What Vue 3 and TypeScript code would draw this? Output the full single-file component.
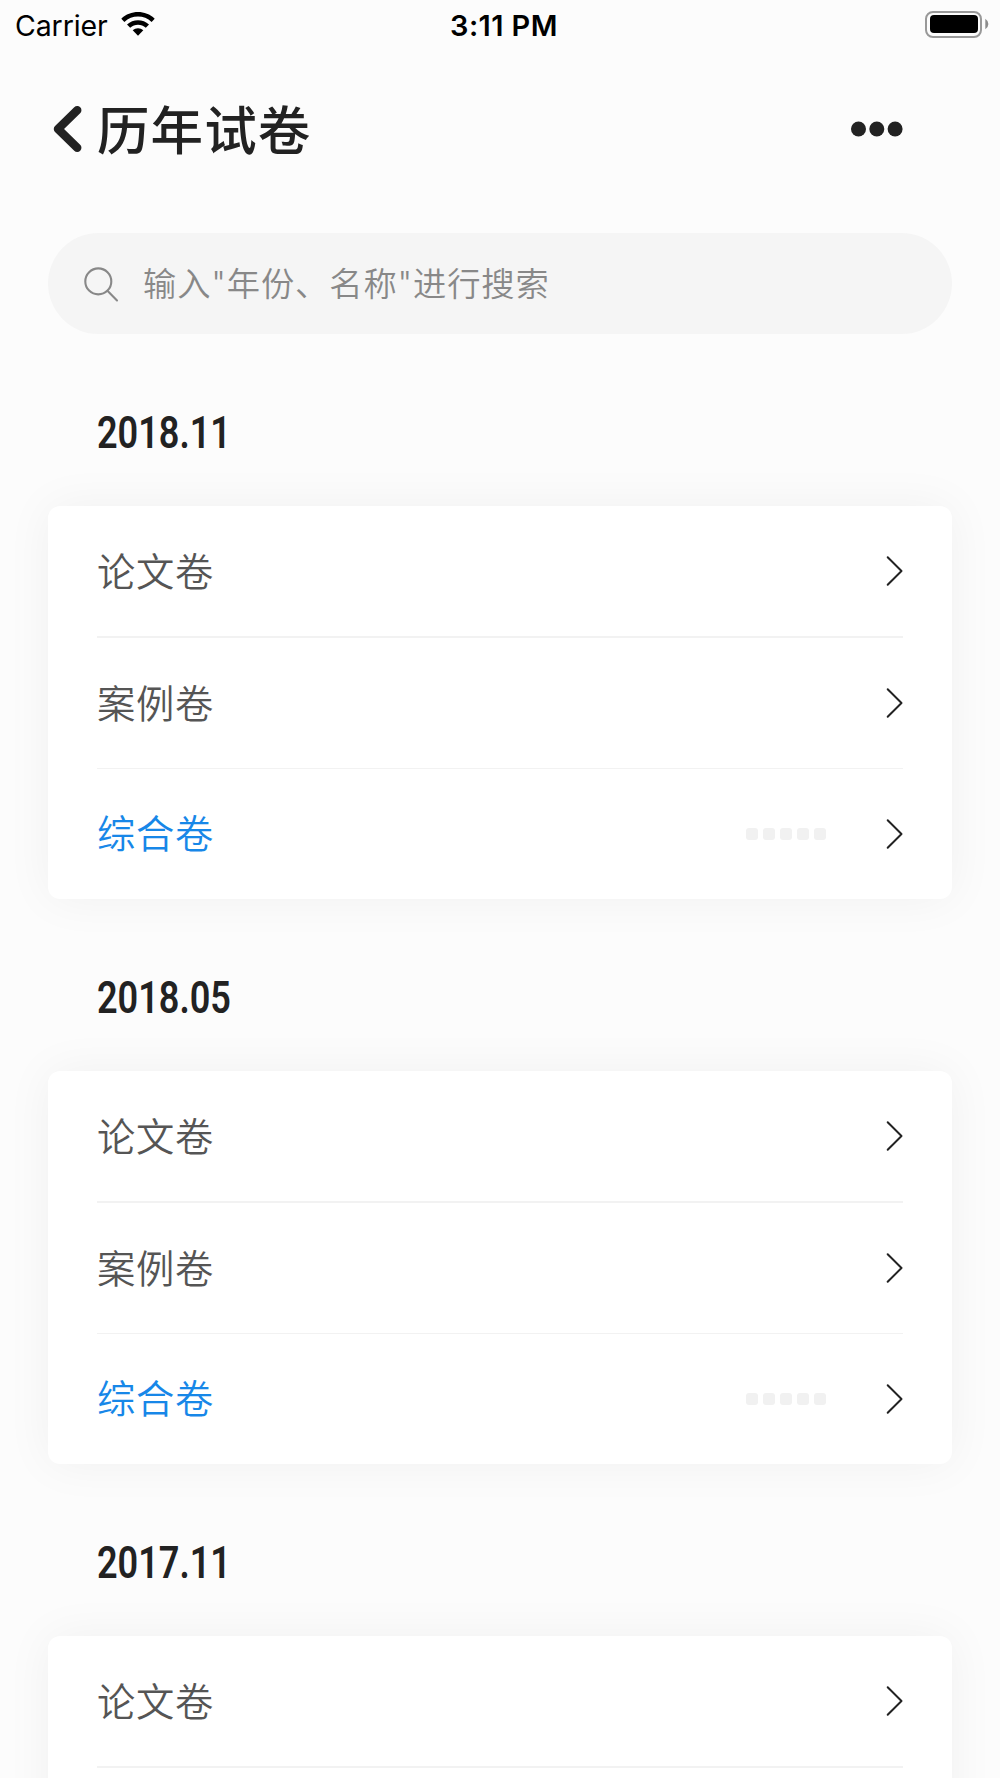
<script setup lang="ts">
interface Paper {
  name: string
  active?: boolean
}
interface Group {
  date: string
  papers: Paper[]
}

const papers: Paper[] = [
  { name: '论文卷' },
  { name: '案例卷' },
  { name: '综合卷', active: true },
]
const groups: Group[] = [
  { date: '2018.11', papers },
  { date: '2018.05', papers },
  { date: '2017.11', papers: papers.slice(0, 1) },
]
</script>

<template>
  <div class="screen">
    <div class="status">
      <div class="status-left">
        <span class="carrier">Carrier</span>
        <svg class="wifi" width="34" height="25" viewBox="0 0 34 25">
          <path d="M0.3 6.7 C9.5 -2.1 24.5 -2.1 33.7 6.7 L30.6 10 C23 2.8 11 2.8 3.4 10 Z" />
          <path d="M6 12.6 C12 6.7 22 6.7 28 12.6 L24.8 15.8 C20.5 11.7 13.5 11.7 9.2 15.8 Z" />
          <path d="M11.7 18.3 C14.7 15.5 19.3 15.5 22.3 18.3 L17 23.8 Z" />
        </svg>
      </div>
      <span class="time">3:11 PM</span>
      <div class="battery">
        <div class="battery-body"><div class="battery-fill"></div></div>
        <svg width="4" height="12" viewBox="0 0 4 12"><path d="M0.3 0.8 Q3.4 3 3.4 6 Q3.4 9 0.3 11.2 Z" fill="#8c8c8c" /></svg>
      </div>
    </div>

    <header class="header">
      <svg class="back" width="29" height="46" viewBox="0 0 29 46">
        <path d="M24.2 4.3 L5 23 L24.2 41.7" />
      </svg>
      <h1 class="title">历年试卷</h1>
      <svg class="more" width="52" height="16" viewBox="0 0 52 16">
        <circle cx="7.5" cy="8" r="7.5" />
        <circle cx="25.8" cy="8" r="7.5" />
        <circle cx="44.1" cy="8" r="7.5" />
      </svg>
    </header>

    <label class="search">
      <svg width="36" height="36" viewBox="0 0 36 36">
        <circle cx="14.3" cy="14.4" r="13" />
        <path d="M23.7 24 L33 33.4" />
      </svg>
      <input class="search-input" type="text" placeholder="输入&quot;年份、名称&quot;进行搜索" />
    </label>

    <section v-for="group in groups" :key="group.date" class="group">
      <h2 class="date"><span>{{ group.date }}</span></h2>
      <ul class="card">
        <li v-for="paper in group.papers" :key="paper.name" class="row">
          <span class="name" :class="{ active: paper.active }">{{ paper.name }}</span>
          <div v-if="paper.active" class="score">
            <i v-for="n in 5" :key="n"></i>
          </div>
          <svg class="arrow" width="18" height="32" viewBox="0 0 18 32">
            <path d="M2.7 2.3 L16.5 16 L2.7 29.7" />
          </svg>
        </li>
      </ul>
    </section>
  </div>
</template>

<style>
body {
  margin: 0;
  background: #fcfcfc;
}
</style>

<style scoped>
.screen {
  width: 1000px;
  height: 1778px;
  overflow: hidden;
  box-sizing: border-box;
  background: #fcfcfc;
  color: #222;
  font-family: 'Noto Sans CJK SC', sans-serif;
}
.status {
  display: grid;
  grid-template-columns: 1fr auto 1fr;
  align-items: center;
  height: 50px;
  padding: 0 11px 0 15px;
  color: #000;
  font-family: Inter, sans-serif;
  font-size: 28px;
}
.status-left {
  display: flex;
  align-items: center;
}
.carrier {
  width: 106px;
  font-size: 28.5px;
  letter-spacing: -0.1px;
}
.wifi {
  margin-top: -1px;
  fill: #000;
}
.time {
  font-weight: 600;
  font-size: 29px;
  letter-spacing: 0.4px;
  margin-left: 4px;
  margin-top: 1px;
}
.battery {
  display: flex;
  align-items: center;
  justify-content: flex-end;
  gap: 3px;
  margin-top: -2px;
}
.battery-body {
  box-sizing: border-box;
  width: 57px;
  height: 27px;
  padding: 2.5px;
  border: 2px solid #999;
  border-radius: 8px;
}
.battery-fill {
  height: 100%;
  background: #000;
  border-radius: 4px;
}
.header {
  display: flex;
  align-items: center;
  height: 158px;
  padding: 0 97px 0 53px;
}
.back {
  fill: none;
  stroke: #222;
  stroke-width: 8.5;
  stroke-linecap: round;
  stroke-linejoin: round;
}
.title {
  margin: -4px 0 0 15px;
  font-size: 52.5px;
  line-height: 70px;
  font-weight: 500;
  letter-spacing: 1.1px;
}
.more {
  margin-left: auto;
  fill: #222;
}
.search {
  display: flex;
  align-items: center;
  height: 101px;
  margin: 25px 48px 0;
  padding: 0 36px;
  box-sizing: border-box;
  border-radius: 51px;
  background: #f5f5f5;
}
.search svg {
  flex: none;
  margin: 2px 0 0 0;
  fill: none;
  stroke: #888;
  stroke-width: 2.1;
  stroke-linecap: round;
}
.search-input {
  flex: 1;
  min-width: 0;
  height: 60px;
  margin: 1px 0 0 23px;
  padding: 0;
  border: 0;
  outline: 0;
  background: none;
  font-family: Inter, 'Noto Sans CJK SC', sans-serif;
  font-size: 33.3px;
  font-weight: 350;
  letter-spacing: 0.85px;
}
.search-input::placeholder {
  color: #888;
  opacity: 1;
}
.group {
  height: 565px;
}
.date {
  display: flex;
  align-items: center;
  height: 172px;
  margin: 0 0 0 97px;
  padding-top: 25px;
  box-sizing: border-box;
  font-family: Roboto, sans-serif;
  font-size: 44px;
  font-weight: 600;
}
.date span {
  transform: scaleX(0.82);
  transform-origin: left;
}
.card {
  height: 393px;
  margin: 0 48px;
  padding: 0 49px;
  list-style: none;
  background: #fff;
  border-radius: 12px;
  box-shadow: 0 0 48px rgba(0, 0, 0, 0.05);
}
.row {
  display: flex;
  align-items: center;
  box-sizing: border-box;
  height: 131px;
}
.row:first-child {
  height: 132px;
  border-bottom: 2px solid #f2f2f2;
}
.row:nth-child(2) {
  border-bottom: 1px solid #f2f2f2;
}
.row:nth-child(3) {
  height: 129px;
}
.name {
  margin-top: -4px;
  font-size: 38.3px;
  font-weight: 350;
  letter-spacing: 0.7px;
  color: #555;
}
.name.active {
  color: #1787e8;
}
.arrow {
  margin-left: auto;
  fill: none;
  stroke: #222;
  stroke-width: 2;
  stroke-linecap: round;
  stroke-linejoin: round;
}
.score {
  display: flex;
  gap: 5px;
  margin-left: auto;
}
.score + .arrow {
  margin-left: 59px;
}
.score i {
  width: 12px;
  height: 12px;
  border-radius: 3px;
  background: #f1f1f1;
}
</style>
